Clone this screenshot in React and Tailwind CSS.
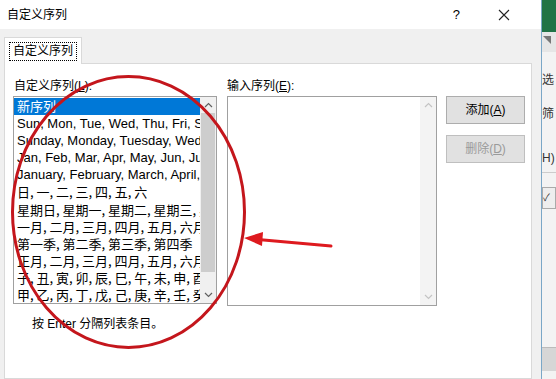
import React from "react";

const items = [
  ["Sun, Mon, Tue, Wed, Thu, Fri, Sat", false],
  ["Sunday, Monday, Tuesday, Wednesday, Thursday", false],
  ["Jan, Feb, Mar, Apr, May, Jun, Jul, Aug", false],
  ["January, February, March, April, May", false],
  ["日, 一, 二, 三, 四, 五, 六", true],
  ["星期日, 星期一, 星期二, 星期三, 星期四", true],
  ["一月, 二月, 三月, 四月, 五月, 六月, 七月", true],
  ["第一季, 第二季, 第三季, 第四季", true],
  ["正月, 二月, 三月, 四月, 五月, 六月, 七月", true],
  ["子, 丑, 寅, 卯, 辰, 巳, 午, 未, 申, 酉, 戌", true],
  ["甲, 乙, 丙, 丁, 戊, 己, 庚, 辛, 壬, 癸", true],
];

function Chevron({ up, color = "#606060" }) {
  return (
    <svg width="9" height="6" viewBox="0 0 9 6">
      <path
        d={up ? "M1 5 L4.5 1.5 L8 5" : "M1 1 L4.5 4.5 L8 1"}
        fill="none"
        stroke={color}
        strokeWidth="1.2"
      />
    </svg>
  );
}

export default function App() {
  return (
    <div className="relative w-[556px] h-[379px] overflow-hidden flex bg-white font-['Liberation_Sans','Noto_Sans_CJK_SC',sans-serif] text-black">
      {/* Dialog */}
      <div className="w-[541px] h-full flex flex-col">
        {/* Title bar */}
        <div className="h-[29px] bg-white flex items-center pl-[7px] pr-[31px] text-[12px]">
          <span className="flex-1">自定义序列</span>
          <span className="text-[13px] mr-[38px]">?</span>
          <svg width="12" height="12" viewBox="0 0 12 12">
            <path d="M1 1 L11 11 M11 1 L1 11" stroke="#222" strokeWidth="1.1" />
          </svg>
        </div>
        {/* Body */}
        <div className="flex-1 bg-[#f0f0f0] pl-[4px] pr-[9px] pt-[8px] flex flex-col">
          <div className="flex">
            <div className="w-[78px] h-[27px] bg-white border border-b-0 border-[#d9d9d9] flex items-center justify-center text-[12px] relative z-10">
              <span className="border border-dotted border-black px-[3px] leading-[17px]">自定义序列</span>
            </div>
          </div>
          <div className="flex-1 bg-white border border-[#d9d9d9] -mt-px pl-[8px] pt-[14px] flex">
            {/* Left column */}
            <div className="w-[204px] flex flex-col">
              <div className="text-[12px] leading-[16px] h-[18px] pl-px">
                自定义序列(<span className="underline">L</span>):
              </div>
              <div className="h-[208px] border border-[#a0a0a0] flex overflow-hidden">
                <div className="flex-1 flex flex-col overflow-hidden text-[13px] leading-[17.1px] pt-px">
                  <div className="bg-[#0078d7] text-white pl-[3px] whitespace-nowrap h-[17.1px]">新序列</div>
                  {items.map(([t, cjk]) => (
                    <div
                      key={t}
                      className={
                        cjk
                          ? "pl-[3px] whitespace-nowrap h-[17.1px] font-['Noto_Sans_CJK_SC',sans-serif]"
                          : "pl-[3px] whitespace-nowrap h-[17.1px]"
                      }
                    >
                      {t}
                    </div>
                  ))}
                </div>
                <div className="w-[16px] bg-[#f0f0f0] flex flex-col items-center">
                  <div className="h-[16px] flex items-center justify-center">
                    <Chevron up />
                  </div>
                  <div className="w-[14px] h-[159px] bg-[#cdcdcd]" />
                  <div className="flex-1" />
                  <div className="h-[17px] flex items-center justify-center">
                    <Chevron />
                  </div>
                </div>
              </div>
              <div className="text-[12px] leading-[16px] pl-[19px] mt-[12px]">按 Enter 分隔列表条目。</div>
            </div>
            {/* Middle column */}
            <div className="w-[210px] ml-[10px] flex flex-col">
              <div className="text-[12px] leading-[16px] h-[18px]">
                输入序列(<span className="underline">E</span>):
              </div>
              <div className="h-[210px] border border-[#a0a0a0] flex">
                <div className="flex-1" />
                <div className="w-[16px] bg-[#f3f3f3] flex flex-col items-center justify-between py-[5px]">
                  <Chevron up color="#c4c4c4" />
                  <Chevron color="#c4c4c4" />
                </div>
              </div>
            </div>
            {/* Buttons */}
            <div className="w-[79px] ml-[9px] pt-[18px] flex flex-col gap-[11px]">
              <div className="h-[28px] bg-[#e1e1e1] border border-[#adadad] flex items-center justify-center text-[12px]">
                添加(<span className="underline">A</span>)
              </div>
              <div className="h-[28px] bg-[#e1e1e1] border border-[#bfbfbf] flex items-center justify-center text-[12px] text-[#9a9a9a]">
                删除(<span className="underline">D</span>)
              </div>
            </div>
          </div>
        </div>
      </div>
      {/* Excel background strip */}
      <div className="w-[15px] h-full border-l border-[#7aa7c7] flex flex-col bg-[#f3f3f3] text-[12px] text-[#333]">
        <div className="h-[32px] bg-[#217346]" />
        <div className="h-[20px] bg-[#e6e6e6] flex items-start">
          <div className="w-0 h-0 border-t-[8px] border-t-[#777] border-l-[8px] border-l-transparent ml-[1px] mt-[4px]" />
        </div>
        <div className="pt-[20px] leading-[16px]">选</div>
        <div className="pt-[18px] leading-[16px]">筛</div>
        <div className="pt-[28px] leading-[16px] border-b border-[#ccc] pb-[6px]">H)</div>
        <div className="mt-[14px] h-[22px] border border-[#aaa] bg-[#eee] text-[10px] leading-[20px]">✓</div>
        <div className="flex-1" />
        <div className="h-[24px] bg-[#d6d6d6] border-t border-[#bbb] mb-[8px]" />
      </div>

      {/* Red annotations */}
      <svg
        className="absolute inset-0 pointer-events-none"
        width="556"
        height="379"
        viewBox="0 0 556 379"
      >
        <ellipse cx="128.5" cy="212" rx="116" ry="135.5" fill="none" stroke="#c4161c" strokeWidth="3" />
        <line x1="331" y1="246" x2="258" y2="239.5" stroke="#de1a1f" strokeWidth="3" strokeLinecap="round" />
        <polygon points="244,238 263,232 262,246" fill="#de1a1f" />
      </svg>
    </div>
  );
}
